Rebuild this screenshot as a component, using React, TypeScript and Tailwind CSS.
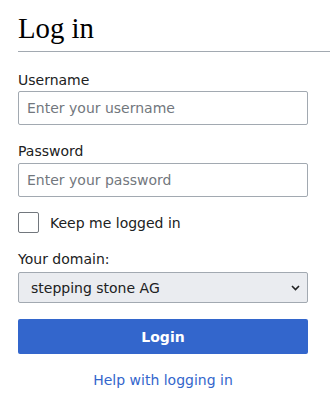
// Login form
/**
 * MediaWiki-style login panel with username, password, domain select
 */

export default function App() {
  return (
    <div className="min-h-[407px] w-[330px] bg-white text-[#202122] font-['DejaVu_Sans',sans-serif] text-[14px]">
      {/* Heading */}
      <h1 className="ml-[18px] pt-[10px] pb-[4px] border-b border-[#a2a9b1] font-['Liberation_Serif',serif] text-[28.8px] leading-[37px] text-black">
        Log in
      </h1>

      <form className="ml-[18px] w-[290px]" onSubmit={(e) => e.preventDefault()}>
        {/* Username */}
        <label className="mt-[18px] block leading-[20px]" htmlFor="wpName">
          Username
        </label>
        <input
          id="wpName"
          type="text"
          placeholder="Enter your username"
          className="mt-[1px] block h-[34px] w-full rounded-[2px] border border-[#a2a9b1] px-[8px] leading-[20px] text-[#202122] placeholder:text-[#72777d] outline-none"
        />

        {/* Password */}
        <label className="mt-[16px] block leading-[20px]" htmlFor="wpPassword">
          Password
        </label>
        <input
          id="wpPassword"
          type="password"
          placeholder="Enter your password"
          className="mt-[2px] block h-[34px] w-full rounded-[2px] border border-[#a2a9b1] px-[8px] leading-[20px] text-[#202122] placeholder:text-[#72777d] outline-none"
        />

        {/* Remember */}
        <div className="mt-[15px] flex h-[21px] items-center">
          <span className="block h-[21px] w-[21px] rounded-[2px] border border-[#72777d] bg-white" />
          <span className="ml-[11px] leading-[20px]">Keep me logged in</span>
        </div>

        {/* Domain */}
        <label className="mt-[16px] block leading-[20px]" htmlFor="wpDomain">
          Your domain:
        </label>
        <div className="relative mt-[3px] h-[31px] w-full">
          <select
            id="wpDomain"
            className="block h-[31px] w-full appearance-none rounded-[2px] border border-[#a2a9b1] bg-[#eaecf0] pl-[12px] pr-[30px] leading-[20px] text-[#202122] outline-none"
            defaultValue="ssag"
          >
            <option value="ssag">stepping stone AG</option>
          </select>
          <svg
            className="pointer-events-none absolute right-[8px] top-[13px]"
            width="9"
            height="6"
            viewBox="0 0 9 6"
          >
            <path d="M1 1l3.5 3.5L8 1" fill="none" stroke="#202122" strokeWidth="1.6" />
          </svg>
        </div>

        {/* Submit */}
        <button
          type="submit"
          className="mt-[16px] block h-[35px] w-full rounded-[2px] bg-[#3366cc] font-bold leading-[20px] text-white"
        >
          Login
        </button>

        <div className="mt-[16px] text-center leading-[20px]">
          <a href="#" className="text-[#3366cc]">
            Help with logging in
          </a>
        </div>
      </form>
    </div>
  );
}
